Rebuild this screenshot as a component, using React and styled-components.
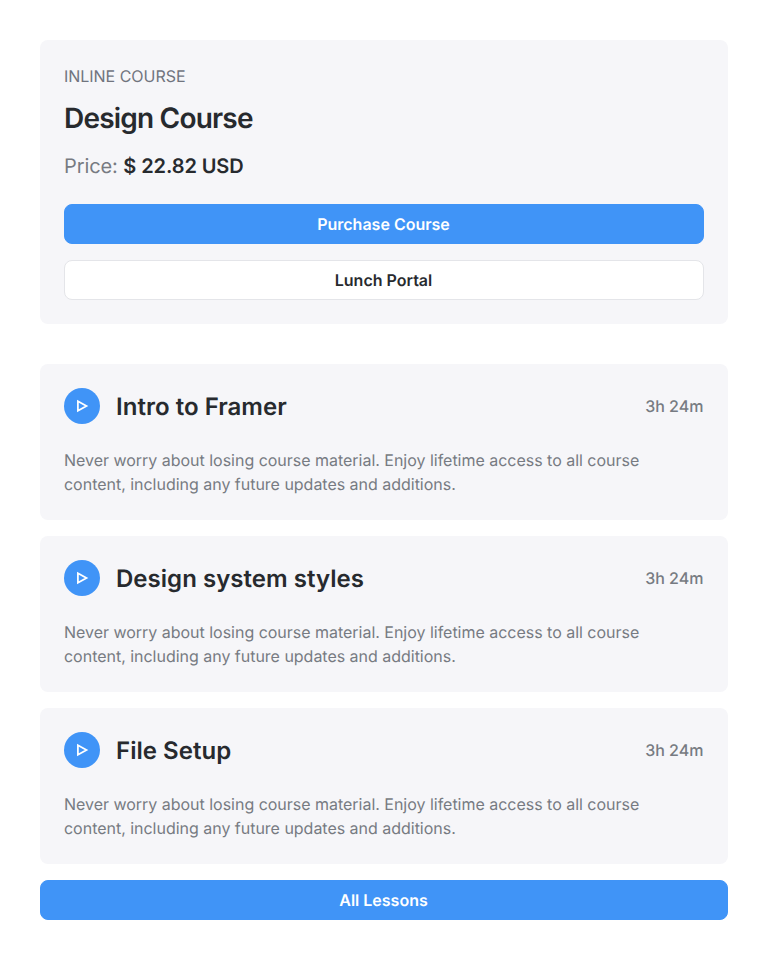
import React from "react";
import styled, { createGlobalStyle } from "styled-components";

const GlobalStyle = createGlobalStyle`
  *, *::before, *::after { box-sizing: border-box; }
  body {
    margin: 0;
    background: #fff;
    font-family: Inter, "Liberation Sans", sans-serif;
    color: #272a2e;
    text-rendering: geometricPrecision;
  }
  h1, h2, p { margin: 0; }
`;

const Page = styled.main`
  display: flex;
  flex-direction: column;
  gap: 40px;
  min-height: 960px;
  padding: 40px;
`;

const Card = styled.section`
  padding: 24px;
  border-radius: 8px;
  background: #f6f6f9;
`;

const Summary = styled(Card)`
  display: flex;
  flex-direction: column;
  height: 284px;
`;

const Eyebrow = styled.p`
  font-size: 16px;
  line-height: 24px;
  letter-spacing: -0.03px;
  color: #70747e;
`;

const Title = styled.h1`
  margin-top: 8px;
  font-size: 28px;
  line-height: 44px;
  font-weight: 600;
  letter-spacing: -0.8px;
`;

const Price = styled.p`
  margin-top: 10px;
  font-size: 20px;
  line-height: 32px;
  letter-spacing: -0.09px;
  color: #777b82;
`;

const Amount = styled.span`
  font-weight: 600;
  color: #272a2e;
`;

const Actions = styled.div`
  display: flex;
  flex-direction: column;
  gap: 16px;
  margin-top: 22px;
`;

const Button = styled.button`
  width: 100%;
  height: 40px;
  padding: 0 1px 0 0;
  border: 1px solid ${(p) => (p.$outline ? "#e4e5e9" : "#4094f7")};
  border-radius: 8px;
  background: ${(p) => (p.$outline ? "#fff" : "#4094f7")};
  color: ${(p) => (p.$outline ? "#272a2e" : "#fff")};
  font: 600 16px/24px Inter, "Liberation Sans", sans-serif;
  text-rendering: inherit;
`;

const Lessons = styled.div`
  display: flex;
  flex-direction: column;
  gap: 16px;
`;

const Lesson = styled(Card)`
  height: 156px;
`;

const LessonHeader = styled.header`
  display: flex;
  align-items: center;
  gap: 16px;
  height: 36px;
`;

const PlayBadge = styled.span`
  display: flex;
  align-items: center;
  justify-content: center;
  width: 36px;
  height: 36px;
  border-radius: 50%;
  background: #4094f7;
`;

const LessonTitle = styled.h2`
  flex: 1;
  padding-top: 2px;
  font-size: 24px;
  line-height: 34px;
  font-weight: 600;
  letter-spacing: 0.03px;
`;

const Duration = styled.span`
  padding-right: 0.6px;
  font-size: 16px;
  line-height: 24px;
  font-weight: 500;
  color: #777b82;
`;

const Description = styled.p`
  margin-top: 24px;
  max-width: 600px;
  font-size: 16px;
  line-height: 24px;
  letter-spacing: -0.02px;
  color: #777b82;
`;

const lessons = ["Intro to Framer", "Design system styles", "File Setup"];

function PlayIcon() {
  return (
    <svg width="16" height="16" viewBox="0 0 16 16" fill="none" aria-hidden="true">
      <path d="M3.9 3.3 12.5 8 3.9 12.7Z" stroke="#fff" strokeWidth="1.75" />
    </svg>
  );
}

export default function App() {
  return (
    <>
      <GlobalStyle />
      <Page>
        <Summary>
          <Eyebrow>INLINE COURSE</Eyebrow>
          <Title>Design Course</Title>
          <Price>Price: <Amount>$ 22.82 USD</Amount></Price>
          <Actions>
            <Button>Purchase Course</Button>
            <Button $outline>Lunch Portal</Button>
          </Actions>
        </Summary>
        <Lessons>
          {lessons.map((title) => (
            <Lesson key={title}>
              <LessonHeader>
                <PlayBadge><PlayIcon /></PlayBadge>
                <LessonTitle>{title}</LessonTitle>
                <Duration>3h 24m</Duration>
              </LessonHeader>
              <Description>
                Never worry about losing course material. Enjoy lifetime access to all course content, including any future updates and additions.
              </Description>
            </Lesson>
          ))}
          <Button>All Lessons</Button>
        </Lessons>
      </Page>
    </>
  );
}
